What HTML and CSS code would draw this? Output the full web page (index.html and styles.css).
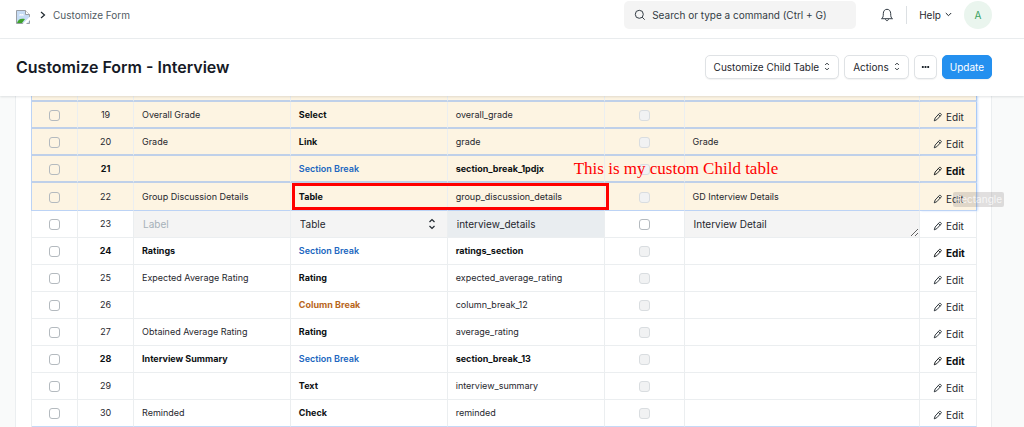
FILE: index.html
```
<!DOCTYPE html>
<html lang="en">
<head>
<meta charset="utf-8">
<title>Customize Form - Interview</title>
<link rel="stylesheet" href="styles.css">
</head>
<body>
<svg class="defs" aria-hidden="true">
  <symbol id="pencil" viewBox="0 0 12 12"><path d="M2.600 7.200 7.700 1.700a.9.9 0 0 1 1.300 0l.7.7a.9.9 0 0 1 0 1.300L4.600 9.200l-3.100 1.400zM6.500 3l2.100 2.100" fill="none" stroke="currentColor" stroke-width="1.100"/></symbol>
  <symbol id="updown" viewBox="0 0 8 12"><path d="M1.500 4 4 1.500 6.500 4M1.500 8 4 10.500 6.500 8" fill="none" stroke="currentColor" stroke-width="1.200"/></symbol>
</svg>
<header class="navbar">
  <a class="logo" href="#" aria-label="Home"><svg width="14" height="14" viewBox="0 0 14 14"><path d="M.5 .5h9l4 4v9H.5z" fill="#c6dcf5" stroke="#9a9fa5"/><path d="M9.500 .5v4h4" fill="#fff" stroke="#9a9fa5"/><path d="M3 5.500a1.500 1.500 0 0 1 2.500-1 1.500 1.500 0 0 1 2.500 1z" fill="#fff"/><path d="M1 13c1-4 4-5 8-4l-3 4z" fill="#3fa32b"/><path d="m6.500 14 7.500-7.500V10l-4 4z" fill="#fff"/></svg></a>
  <nav class="crumbs"><svg width="6" height="8" viewBox="0 0 6 8"><path d="m1 1 3.500 3L1 7" fill="none" stroke="#1f272e" stroke-width="1.200"/></svg><a href="#">Customize Form</a></nav>
  <div class="nav-right">
    <label class="search"><svg width="12" height="12" viewBox="0 0 12 12"><circle cx="5.300" cy="5.300" r="4" fill="none" stroke="#333c44"/><path d="m8.200 8.200 2.500 2.500" stroke="#333c44"/></svg><input type="text" placeholder="Search or type a command (Ctrl + G)" aria-label="Search"></label>
    <button class="plain bell" aria-label="Notifications"><svg width="14" height="14" viewBox="0 0 14 14"><path d="M1.500 10.700c1.500-1 1.800-2 1.800-5C3.300 3 4.800 1.300 7 1.300S10.700 3 10.700 5.700c0 3 .3 4 1.800 5zM5.500 11c.2 2.200 2.800 2.200 3 0" fill="none" stroke="#333c44"/></svg></button>
    <button class="plain help">Help <svg width="7" height="5" viewBox="0 0 7 5"><path d="m.8 1 2.700 2.700L6.200 1" fill="none" stroke="currentColor"/></svg></button>
    <button class="avatar">A</button>
  </div>
</header>
<section class="page-head">
  <h1>Customize Form - Interview</h1>
  <div class="actions">
    <button class="btn">Customize Child Table <svg width="6" height="9"><use href="#updown"/></svg></button>
    <button class="btn">Actions <svg width="6" height="9"><use href="#updown"/></svg></button>
    <button class="btn dots" aria-label="More"><svg width="9" height="4" viewBox="0 0 10 4"><path d="M1 1h2v2H1zM4 1h2v2H4zM7 1h2v2H7z" fill="#1f272e"/></svg></button>
    <button class="btn primary">Update</button>
  </div>
</section>
<main class="page-body">
  <div class="card">
    <table class="grid">
      <colgroup><col class="c-check"><col class="c-no"><col class="c-text"><col class="c-text"><col class="c-text"><col class="c-req"><col><col class="c-edit"></colgroup>
      <tbody id="rows">
        <tr class="hl cut"><td></td><td></td><td></td><td></td><td></td><td></td><td></td><td></td></tr>
      </tbody>
    </table>
  </div>
</main>
<script src="rows.js"></script>
</body>
</html>
```
FILE: rows.js
```
const rows = [
  [19, "Overall Grade", "Select", "overall_grade", ""],
  [20, "Grade", "Link", "grade", "Grade"],
  [21, "", "Section Break", "section_break_1pdjx", ""],
  [22, "Group Discussion Details", "Table", "group_discussion_details", "GD Interview Details"],
  [23, "", "Table", "interview_details", "Interview Detail"],
  [24, "Ratings", "Section Break", "ratings_section", ""],
  [25, "Expected Average Rating", "Rating", "expected_average_rating", ""],
  [26, "", "Column Break", "column_break_12", ""],
  [27, "Obtained Average Rating", "Rating", "average_rating", ""],
  [28, "Interview Summary", "Section Break", "section_break_13", ""],
  [29, "", "Text", "interview_summary", ""],
  [30, "Reminded", "Check", "reminded", ""]
];
const edit = '<td class="edit"><button class="plain"><svg width="10" height="10"><use href="#pencil"/></svg>Edit</button></td>';

document.getElementById("rows").insertAdjacentHTML("beforeend", rows.map(([no, label, type, name, options]) => {
  const lead = `<td class="mid"><input type="checkbox" aria-label="Select row ${no}"></td><td class="mid">${no}</td>`;
  if (no === 23) {
    return `<tr class="editing">${lead}
      <td class="field"><input type="text" placeholder="Label" aria-label="Label"></td>
      <td class="field"><div class="select"><select aria-label="Type"><option>Table</option></select><svg width="8" height="12"><use href="#updown"/></svg></div></td>
      <td class="field name"><input type="text" value="${name}" aria-label="Name"></td>
      <td class="mid"><input type="checkbox" aria-label="Mandatory"></td>
      <td class="field"><textarea rows="1" aria-label="Options">${options}</textarea></td>${edit}</tr>`;
  }
  const kind = type === "Section Break" ? "section" : type === "Column Break" ? "column" : "";
  const rowClass = [no < 23 ? "hl" : "", kind === "section" ? "bold" : "", no === 22 ? "marked" : "", no === 30 ? "last" : ""].join(" ");
  const note = no === 21 ? '<span class="note">This is my custom Child table</span>' : "";
  const box = no === 22 ? '<span class="box"></span>' : "";
  const tip = no === 22 ? '<span class="tip">Rectangle</span></td>' : "</td>";
  return `<tr class="${rowClass}">${lead}<td>${label}</td><td class="type ${kind}">${type}${box}</td><td class="anchor">${name}${note}</td>
    <td class="mid"><input type="checkbox" disabled aria-label="Mandatory"></td><td>${options}</td>${edit.replace("</td>", tip)}</tr>`;
}).join(""));
```
FILE: styles.css
```
* { box-sizing: border-box; }
body {
  margin: 0;
  height: 100vh;
  display: flex;
  flex-direction: column;
  overflow: hidden;
  background: #f9fafa;
  color: #1f272e;
  font: 10px/16px Inter, sans-serif;
}
button, input, select, textarea { font: inherit; color: inherit; margin: 0; }
a { color: inherit; text-decoration: none; }
svg { display: block; flex: none; }
.defs { position: absolute; width: 0; height: 0; }
.plain { display: flex; align-items: center; border: 0; padding: 0; background: none; }

.navbar {
  flex: none;
  display: flex;
  align-items: center;
  height: 39px;
  padding: 0 32px 9px 16px;
  background: #fff;
  border-bottom: 1px solid #ebeef0;
}
.logo { padding-top: 4px; }
.crumbs { display: flex; align-items: center; gap: 7px; margin-left: 10px; color: #505a62; }
.nav-right { display: flex; align-items: center; margin-left: auto; }
.search {
  display: flex;
  align-items: center;
  gap: 6px;
  width: 232px;
  height: 28px;
  padding: 0 10px;
  border-radius: 5px;
  background: #f4f4f4;
}
.search input { flex: 1; min-width: 0; padding: 0; border: 0; outline: 0; background: none; }
.search input::placeholder { color: #333c44; opacity: 1; }
.bell { margin-left: 24px; }
.help { gap: 4px; height: 18px; margin-left: 12px; padding-left: 12px; border-left: 1px solid #dce0e3; }
.avatar { width: 28px; height: 28px; margin-left: 12px; padding: 0; border: 0; border-radius: 50%; background: #eaf5ee; color: #38a160; }

.page-head {
  position: relative;
  z-index: 1;
  flex: none;
  display: flex;
  align-items: center;
  justify-content: space-between;
  height: 57px;
  padding: 0 32px 2px 16px;
  background: #fff;
  box-shadow: 0 1px 2px rgba(25, 39, 52, .12);
}
h1 { margin: 0; font-size: 16px; font-weight: 600; line-height: 24px; color: #161a26; }
.actions { display: flex; gap: 5px; }
.btn {
  display: flex;
  align-items: center;
  gap: 5px;
  height: 24px;
  padding: 0 8px;
  border: 1px solid #dfe2e5;
  border-radius: 5px;
  background: #fff;
  box-shadow: 0 1px 1px rgba(0, 0, 0, .05);
}
.btn.dots { padding: 0 6px; }
.btn.primary { padding: 0 7px; border-color: #2490ef; background: #2490ef; color: #fff; }

.page-body { flex: 1; min-height: 0; padding: 0 32px 0 15px; }
.card { height: 100%; padding: 0 14px 0 15px; background: #fff; border: 1px solid #ebeef0; border-width: 0 1px; }
.grid { width: 100%; table-layout: fixed; border-collapse: separate; border-spacing: 0; border-left: 1px solid #ebeef0; font-size: 9px; }
.c-check { width: 46px; }
.c-no { width: 56px; }
.c-text { width: 16.6%; }
.c-req { width: 80px; }
.c-edit { width: 57px; }
td { height: 27px; padding: 0 8px; border: 1px solid #ebeef0; border-width: 0 1px 1px 0; white-space: nowrap; }
.cut td { height: 6px; line-height: 0; }
.mid { text-align: center; }
.hl td { background: #fdf4e2; border-bottom: 2px solid #bfd0e9; }
.hl.marked td { height: 28px; border-bottom: 1px solid #bcd3f5; }
.hl td:first-child { box-shadow: -1px 0 #bcd3f5; }
.hl td:last-child { border-right-color: #a9c9f7; box-shadow: 1px 0 2px #cfe1fb; }
.last td { border-bottom-color: #c5d9f7; }
.bold td, .type { color: #0c1013; font-weight: 700; }
td.section { color: #2066c0; font-weight: 600; }
td.column { color: #b8661c; font-weight: 700; }
.anchor, .marked .type, .marked .edit { position: relative; }

input[type="checkbox"] {
  appearance: none;
  display: inline-block;
  width: 11px;
  height: 11px;
  border: 1px solid #b4babf;
  border-radius: 3px;
  vertical-align: middle;
}
input[type="checkbox"]:disabled { border-color: #d9dde0; background: #f1f2f3; }
td.edit { padding: 4px 0 0 13px; font-size: 10px; }
.edit .plain { gap: 3px; font-weight: inherit; }

.editing .field { padding: 0; background: #f4f4f4; font-size: 10px; }
.editing .field.name { background: #e9edf0; }
.field input, .field select, .field textarea {
  display: block;
  width: 100%;
  height: 26px;
  padding: 0 9px;
  border: 0;
  outline: 0;
  border-radius: 0;
  background: none;
  appearance: none;
}
.field textarea { padding-top: 5px; resize: vertical; overflow: hidden; }
.field input::placeholder { color: #a6b1b9; opacity: 1; }
.select { display: grid; align-items: center; }
.select > * { grid-area: 1 / 1; }
.select svg { justify-self: end; margin-right: 11px; pointer-events: none; }

.box { position: absolute; z-index: 1; left: 1px; top: 0; width: 317px; height: 27px; border: 3px solid #f00; pointer-events: none; }
.note { position: absolute; z-index: 1; left: 126px; top: 3px; font: 17px/20px "Liberation Serif", serif; color: #f00; }
.tip {
  position: absolute;
  left: 33px;
  top: 9px;
  width: 51px;
  height: 15px;
  border-radius: 2px;
  background: rgba(120, 110, 110, .22);
  color: rgba(255, 255, 255, .75);
  font-weight: 400;
  line-height: 15px;
  text-align: center;
}
```
